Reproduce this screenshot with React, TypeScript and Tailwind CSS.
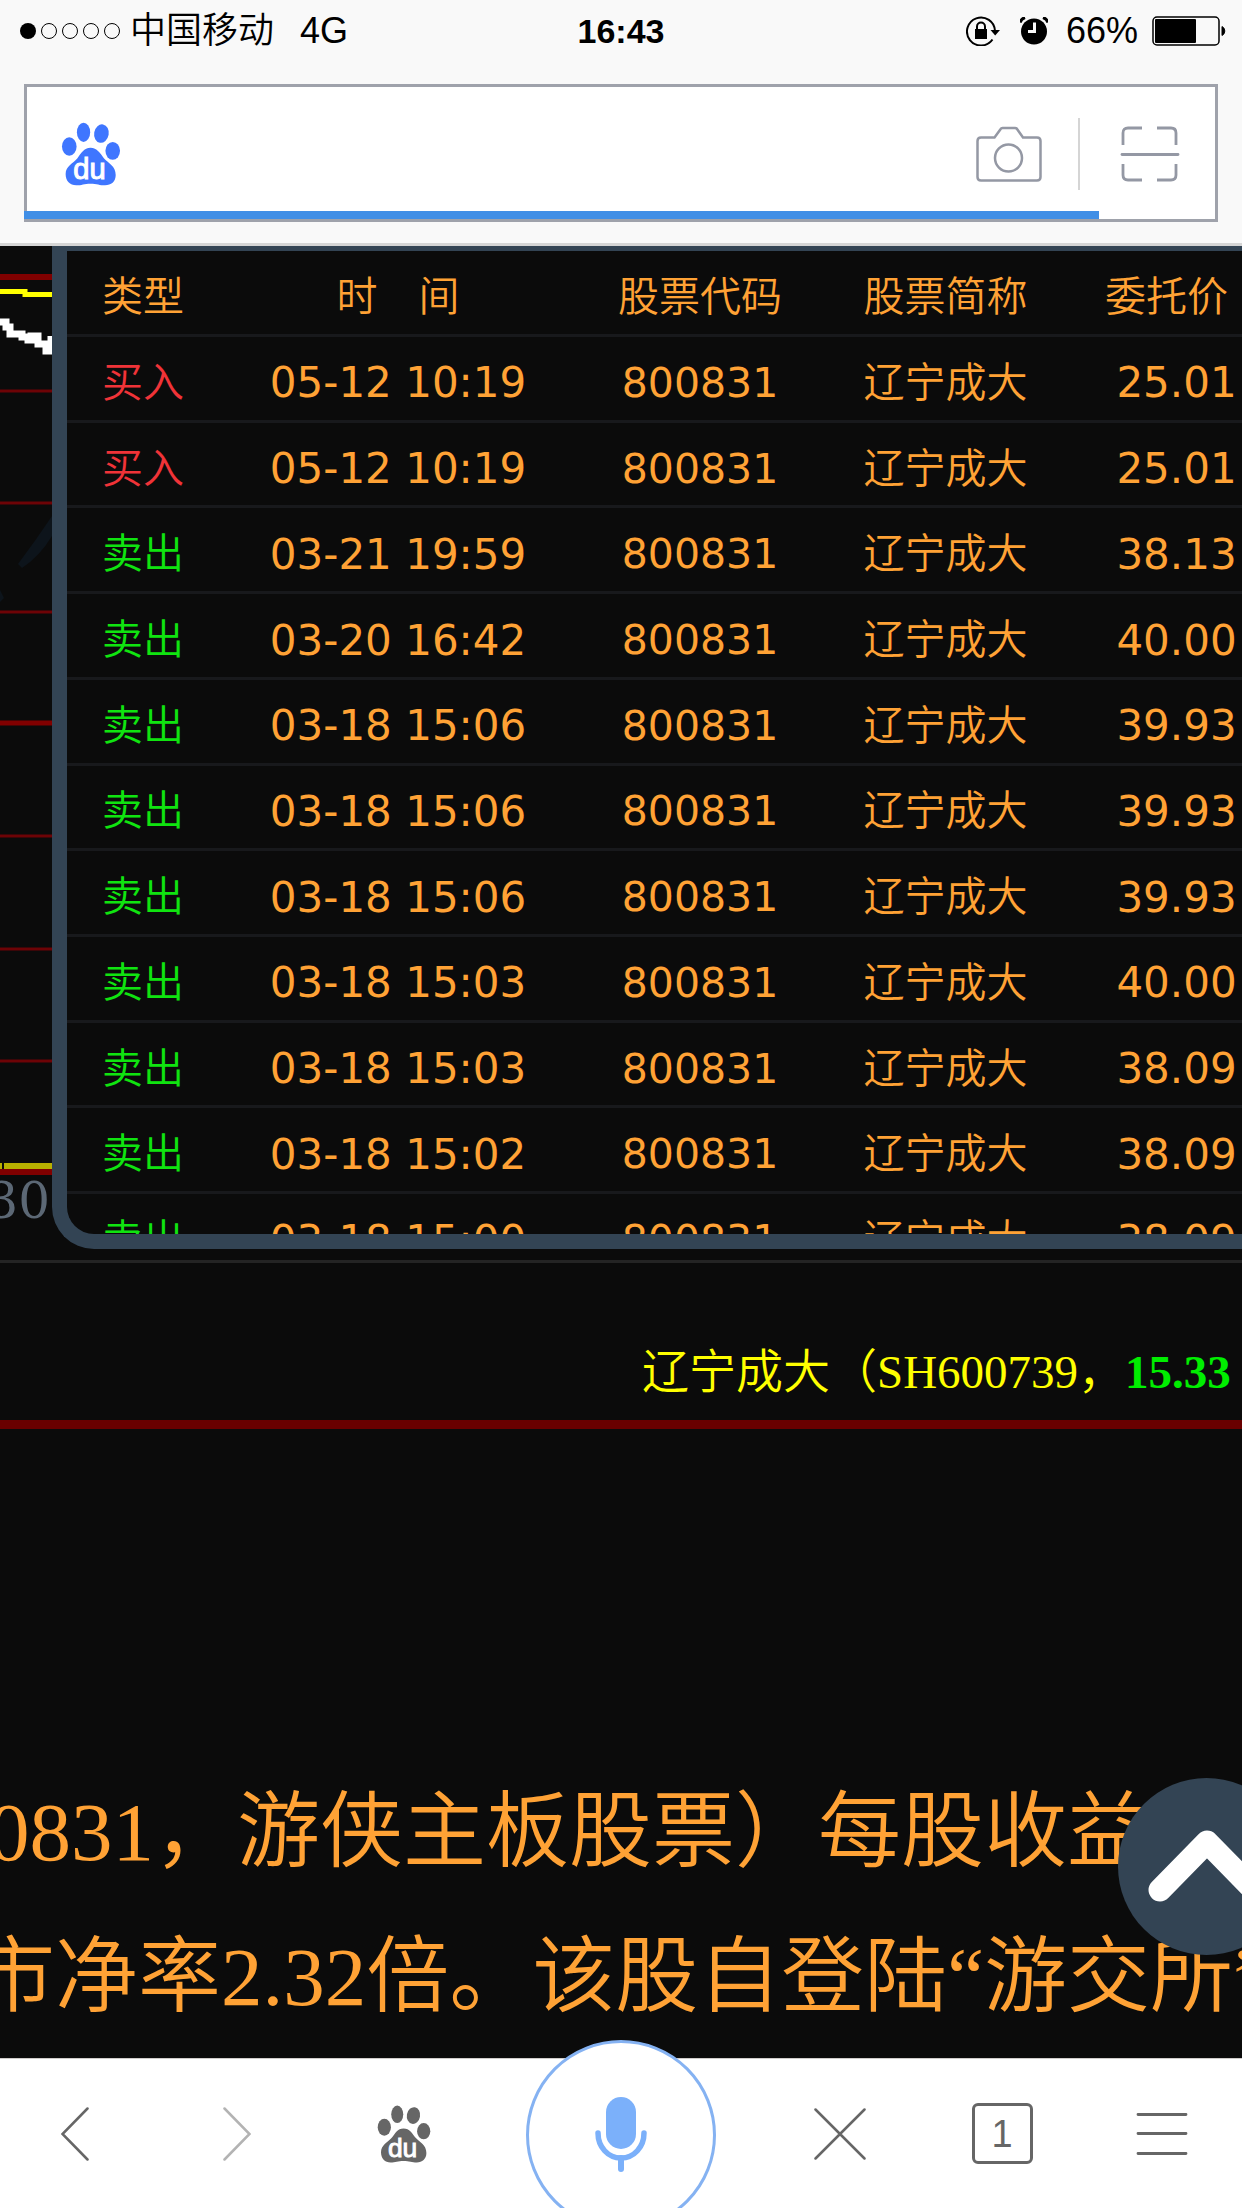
import type { ReactNode } from "react";

type Side = "buy" | "sell";

interface Trade {
  side: Side;
  time: string;
  code: string;
  name: string;
  price: string;
}

const sell = (time: string, price: string): Trade => ({ side: "sell", time, code: "800831", name: "辽宁成大", price });
const buy = (time: string, price: string): Trade => ({ side: "buy", time, code: "800831", name: "辽宁成大", price });

const trades: Trade[] = [
  buy("05-12 10:19", "25.01"),
  buy("05-12 10:19", "25.01"),
  sell("03-21 19:59", "38.13"),
  sell("03-20 16:42", "40.00"),
  sell("03-18 15:06", "39.93"),
  sell("03-18 15:06", "39.93"),
  sell("03-18 15:06", "39.93"),
  sell("03-18 15:03", "40.00"),
  sell("03-18 15:03", "38.09"),
  sell("03-18 15:02", "38.09"),
  sell("03-18 15:00", "38.09"),
];

function Paw({ className }: { className: string }) {
  return (
    <svg viewBox="183 367 179 193" className={className} fill="currentColor" aria-hidden="true">
      <ellipse cx="207" cy="441" rx="22" ry="28" />
      <ellipse cx="250" cy="398" rx="20" ry="29" />
      <ellipse cx="304" cy="402" rx="22" ry="28" transform="rotate(10 304 402)" />
      <ellipse cx="338" cy="454" rx="22" ry="27" />
      <path d="M271 445c20 0 29 17 41 32 13 14 35 23 35 50 0 20-14 31-32 31-16 0-25-5-44-5s-27 5-43 5c-19 0-32-13-32-34 0-24 22-32 35-47 12-15 20-32 40-32z" />
      <text x="268" y="540" textAnchor="middle" fill="#fff" stroke="#fff" strokeWidth="3" fontSize="88" fontFamily="Liberation Sans, sans-serif">
        du
      </text>
    </svg>
  );
}

function StatusBar() {
  return (
    <div className="grid h-[60px] grid-cols-[1fr_auto_1fr] items-center px-4 pt-0.5 text-[36px] leading-none text-black">
      <div className="flex items-center pl-1">
        <div className="flex gap-[5px]">
          <span className="size-4 rounded-full bg-black" />
          <span className="size-4 rounded-full border border-black" />
          <span className="size-4 rounded-full border border-black" />
          <span className="size-4 rounded-full border border-black" />
          <span className="size-4 rounded-full border border-black" />
        </div>
        <span className="ml-2.5 font-[350]">中国移动</span>
        <span className="ml-[26px]">4G</span>
      </div>
      <span className="text-[34px] font-bold">16:43</span>
      <div className="flex items-center justify-end">
        <svg viewBox="0 0 34 30" className="h-[30px] w-[34px]" aria-label="方向锁定">
          <path d="M26.5 23.5A14 14 0 1 1 29 15" fill="none" stroke="#000" strokeWidth="2" />
          <path d="M24.500 14H34L29.200 19.500z" />
          <rect x="9" y="13" width="12" height="10" />
          <path d="M11 13V10.500a4 4 0 0 1 8 0V13" fill="none" stroke="#000" strokeWidth="2" />
        </svg>
        <svg viewBox="0 0 28 28" className="ml-5 size-7" aria-label="闹钟">
          <circle cx="14" cy="14.500" r="13" />
          <path d="M0 5.500A8 8 0 0 1 5 0.500M28 5.500A8 8 0 0 0 23 0.500" fill="none" stroke="#000" strokeWidth="3" />
          <path d="M14.500 5.500V14.500H8" fill="none" stroke="#f9f9f9" strokeWidth="3" />
        </svg>
        <span className="ml-[18px]">66%</span>
        <svg viewBox="0 0 74 30" className="ml-3.5 h-[30px] w-[74px]" aria-label="电量">
          <rect x="1" y="1" width="66" height="28" rx="4" fill="none" stroke="#000" strokeWidth="1.500" />
          <rect x="3" y="3" width="41" height="24" rx="1" />
          <path d="M70 10.500a5 5 0 0 1 0 9z" stroke="#000" />
        </svg>
      </div>
    </div>
  );
}

function SearchBar() {
  return (
    <div className="border-b-3 border-[#d5d5d5] px-6 pb-[21px] pt-6">
      <form className="relative flex h-[138px] items-center border-3 border-[#9fa2ab] bg-white pl-[34px] pr-[35px] pt-0.5">
        <Paw className="h-16 w-[60px] text-[#3f76ff]" />
        <input type="text" aria-label="搜索" className="ml-4 h-full min-w-0 flex-1 bg-transparent text-[36px] outline-none" />
        <button type="button" aria-label="拍照搜索">
          <svg viewBox="0 0 66 56" className="h-14 w-[66px]" fill="none" stroke="#9498a4" strokeWidth="2.500">
            <path d="M5 11.500H18.500L24.500 3.200Q25.200 2 26.500 2H39Q40.400 2 41.200 3.200L47 11.500H61Q64.500 11.500 64.500 15V51Q64.500 54.500 61 54.500H5Q1.500 54.500 1.500 51V15Q1.500 11.500 5 11.500Z" />
            <circle cx="32.500" cy="32" r="13.500" />
          </svg>
        </button>
        <span className="ml-9 h-[72px] w-0.5 bg-[#d5d5d5]" />
        <button type="button" aria-label="扫一扫" className="ml-10">
          <svg viewBox="0 0 60 56" className="h-14 w-[60px]" fill="none" stroke="#9498a4" strokeWidth="2.800">
            <path d="M22 2H8Q3 2 3 7V19M37 2H51Q56 2 56 7V19M3 38V49Q3 54 8 54H22M37 54H51Q56 54 56 49V38" />
            <path d="M2 28.500H58" strokeLinecap="round" />
          </svg>
        </button>
        <span className="absolute -left-[3px] bottom-0 h-2 w-[90.5%] bg-[#418fe6]" />
      </form>
    </div>
  );
}

function ChartEdge() {
  return (
    <div className="flex w-[52px] shrink-0 flex-col items-end overflow-hidden">
      <svg viewBox="0 0 52 930" className="h-[930px] w-[52px] shrink-0" aria-hidden="true">
        <path d="M52 270Q36 294 18 318L22 322Q40 310 52 290zM0 344L4 352L0 356z" fill="#0d141b" />
        <path d="M0 31H52" stroke="#800000" strokeWidth="6" />
        <path d="M0 145H52M0 257H52M0 366H52M0 590H52M0 703H52M0 815H52" stroke="#6d0306" strokeWidth="3" />
        <path d="M0 477H52" stroke="#800000" strokeWidth="5" />
        <path d="M0 45.500H25V48.500H52" fill="none" stroke="#ff0" strokeWidth="5" />
        <path d="M0 76H6V81H10V88H22V91H28V94H31V90H38V98H46V105H51V90" fill="none" stroke="#fff" strokeWidth="7" />
        <path d="M0 920H2M4 920H52" stroke="#b8b000" strokeWidth="6" />
        <path d="M0 926H52" stroke="#800000" strokeWidth="6" />
      </svg>
      <span className="pr-0.5 font-['DejaVu_Serif',serif] text-[50px] leading-[50px] text-[#5c6875]">30</span>
    </div>
  );
}

function TradePanel() {
  const cell = "border-b-3 border-[#18191c] p-0 pt-2.5 text-center whitespace-nowrap";
  return (
    <div className="h-[1003px] min-w-0 flex-1 overflow-hidden rounded-bl-[42px] border-b-15 border-l-15 border-t-5 border-[#334454]">
      <table className="h-[1029px] w-[1218px] table-fixed border-separate border-spacing-0 font-['DejaVu_Sans','Noto_Sans_CJK_SC',sans-serif] text-[41px] leading-none text-[#ffa235]">
        <colgroup>
          <col className="w-[152px]" />
          <col className="w-[358px]" />
          <col className="w-[246px]" />
          <col className="w-[245px]" />
          <col className="w-[217px]" />
        </colgroup>
        <thead>
          <tr className="h-[86px]">
            <th className={`${cell} font-[350]`}>类型</th>
            <th className={`${cell} font-[350]`}>时　间</th>
            <th className={`${cell} font-[350]`}>股票代码</th>
            <th className={`${cell} font-[350]`}>股票简称</th>
            <th className={`${cell} pr-5 font-[350]`}>委托价</th>
          </tr>
        </thead>
        <tbody>
          {trades.map((t, i) => (
            <tr key={i} className="h-[85px]">
              <td className={`${cell} font-[350] ${t.side === "buy" ? "text-[#f03338]" : "text-[#10e410]"}`}>
                {t.side === "buy" ? "买入" : "卖出"}
              </td>
              <td className={`${cell} text-[42px]`}>{t.time}</td>
              <td className={cell}>{t.code}</td>
              <td className={`${cell} font-[350]`}>{t.name}</td>
              <td className={`${cell} text-[42px]`}>{t.price}</td>
            </tr>
          ))}
        </tbody>
      </table>
    </div>
  );
}

function NavButton({ label, children, disabled }: { label: string; children: ReactNode; disabled?: boolean }) {
  return (
    <button type="button" aria-label={label} disabled={disabled} className="flex h-full items-center justify-center">
      {children}
    </button>
  );
}

function BottomNav() {
  return (
    <nav className="relative grid h-[150px] shrink-0 grid-cols-[150fr_174fr_160fr_274fr_164fr_160fr_160fr] items-center border-t border-[#d0ccca] bg-white text-[#666]">
      <NavButton label="后退">
        <svg viewBox="0 0 28 54" className="h-[54px] w-7" fill="none" stroke="currentColor" strokeWidth="2.500" strokeLinecap="round">
          <path d="M26.500 1.500L1.500 27L26.500 52.500" />
        </svg>
      </NavButton>
      <NavButton label="前进" disabled>
        <svg viewBox="0 0 28 54" className="h-[54px] w-7" fill="none" stroke="#b3b3b3" strokeWidth="2.500" strokeLinecap="round">
          <path d="M1.500 1.500L26.500 27L1.500 52.500" />
        </svg>
      </NavButton>
      <NavButton label="首页">
        <Paw className="h-[58px] w-[54px]" />
      </NavButton>
      <div className="relative h-full">
        <button
          type="button"
          aria-label="语音搜索"
          className="absolute -top-[19px] left-1/2 flex size-[190px] -translate-x-1/2 items-center justify-center rounded-full border-3 border-[#85b2f2] bg-white"
        >
          <svg viewBox="0 0 52 76" className="h-[76px] w-[52px]" fill="none" stroke="#7bb0fa" strokeLinecap="round">
            <rect x="11" y="0" width="30" height="52" rx="15" fill="#7bb0fa" stroke="none" />
            <path d="M3 36C3 50 13 61 26 61S49 50 49 36" strokeWidth="5.500" />
            <path d="M26 61V72" strokeWidth="6" />
          </svg>
        </button>
      </div>
      <NavButton label="停止">
        <svg viewBox="0 0 52 52" className="size-[52px]" stroke="currentColor" strokeWidth="2.500" strokeLinecap="round">
          <path d="M1.500 1.500L50.500 50.500M50.500 1.500L1.500 50.500" />
        </svg>
      </NavButton>
      <NavButton label="窗口">
        <span className="flex size-[61px] items-center justify-center rounded-md border-3 border-[#666] text-[38px] leading-none">1</span>
      </NavButton>
      <NavButton label="菜单">
        <svg viewBox="0 0 52 44" className="h-11 w-[52px]" stroke="currentColor" strokeWidth="2.800" strokeLinecap="round">
          <path d="M2 2.500H50M2 21.500H50M2 41.500H50" />
        </svg>
      </NavButton>
    </nav>
  );
}

export default function App() {
  return (
    <div className="flex h-screen flex-col overflow-hidden bg-[#f9f9f9] font-['Liberation_Sans','Noto_Sans_CJK_SC',sans-serif]">
      <StatusBar />
      <SearchBar />

      <main className="relative min-h-0 flex-1 overflow-hidden bg-[#0b0b0b] font-['Liberation_Serif','Noto_Sans_CJK_SC',serif]">
        <div className="flex">
          <ChartEdge />
          <TradePanel />
        </div>

        {/* Quote line */}
        <section className="mt-[11px] border-b-9 border-t-3 border-b-[#690000] border-t-[#242424]">
          <p className="ml-[642px] pb-[17px] pt-[79px] text-[47px] leading-[61px] font-[350] whitespace-nowrap text-[#ff0]">
            辽宁成大（SH600739，<b className="font-bold text-[#0e0]">15.33</b>
          </p>
        </section>

        {/* Article, scrolled sideways */}
        <article className="pt-[331px] text-[83px] leading-[145px] whitespace-nowrap text-[#ffa235]">
          <p className="-ml-3 font-[350]">0831，游侠主板股票）每股收益</p>
          <p className="-ml-7 font-[350]">市净率2.32倍。该股自登陆“游交所”</p>
        </article>

        <button
          type="button"
          aria-label="回到顶部"
          className="absolute -right-[53px] bottom-[103px] flex size-[177px] items-center justify-center rounded-full bg-[#334454]"
        >
          <svg viewBox="0 0 120 80" className="h-20 w-[120px]" fill="none" stroke="#fff" strokeWidth="23" strokeLinecap="round" strokeLinejoin="round">
            <path d="M13 63L60 15L107 63" />
          </svg>
        </button>
      </main>

      <BottomNav />
    </div>
  );
}
